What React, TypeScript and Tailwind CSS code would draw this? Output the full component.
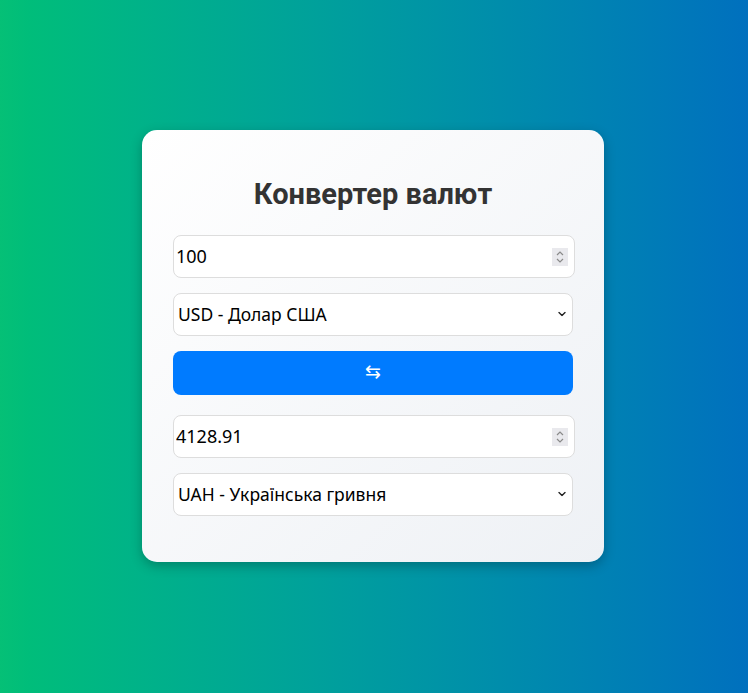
import { useState } from "react";

const RATES: Record<string, number> = { USD: 1, UAH: 41.2891, EUR: 0.92 };

// grey spin box drawn over the number field, as the browser shows it
function Spinner() {
  return (
    <span className="pointer-events-none absolute top-[13px] right-[5px] flex h-[18px] w-[16px] items-center justify-center bg-[#e9e9ed]">
      <svg width="10" height="14" viewBox="0 0 10 14" fill="none" stroke="#8a8a8a" strokeWidth="1.2">
        <path d="M2 5 L5 2 L8 5" />
        <path d="M2 9 L5 12 L8 9" />
      </svg>
    </span>
  );
}

function Chevron() {
  return (
    <svg
      className="pointer-events-none absolute top-1/2 right-[7px] -translate-y-1/2"
      width="8"
      height="5"
      viewBox="0 0 8 5"
      fill="none"
      stroke="#222"
      strokeWidth="1.4"
      strokeLinecap="round"
      strokeLinejoin="round"
    >
      <path d="M1 1 L4 4 L7 1" />
    </svg>
  );
}

function CurrencySelect({ value, onChange }: { value: string; onChange: (v: string) => void }) {
  return (
    <div className="relative mt-[15px] w-[400px]">
      <select
        value={value}
        onChange={(e) => onChange(e.target.value)}
        className="h-[43px] w-[400px] appearance-none rounded-[8px] border border-[#ddd] bg-white pl-[4px] text-[17.5px] text-black outline-none"
      >
        <option value="USD">USD - Долар США</option>
        <option value="EUR">EUR - Євро</option>
        <option value="UAH">UAH - Українська гривня</option>
      </select>
      <Chevron />
    </div>
  );
}

export default function App() {
  const [amount, setAmount] = useState("100");
  const [from, setFrom] = useState("USD");
  const [to, setTo] = useState("UAH");

  const result = ((parseFloat(amount) || 0) * RATES[to]) / RATES[from];

  const swap = () => {
    setFrom(to);
    setTo(from);
  };

  const field =
    "h-[43px] w-[402px] rounded-[8px] border border-[#ddd] bg-white pl-[2px] pr-[3px] text-[18px] text-black outline-none [appearance:textfield] [&::-webkit-inner-spin-button]:appearance-none [&::-webkit-outer-spin-button]:appearance-none";

  return (
    <div className="flex min-h-[693px] w-full items-center justify-center bg-gradient-to-r from-[#05c076] to-[#0170be]">
      <div
        className="mr-[2px] mb-[2px] w-[462px] rounded-[15px] bg-gradient-to-br from-white to-[#eef1f5] px-[31px] pt-[44px] pb-[46px] shadow-[0_4px_12px_rgba(0,0,0,0.25)]"
        style={{ fontFamily: '"Noto Sans", sans-serif' }}
      >
        <h1 className="mb-[21px] text-center font-['Roboto',sans-serif] text-[29px] font-bold leading-[40px] text-[#333]">
          Конвертер валют
        </h1>

        <div className="flex flex-col">
          <div className="relative">
            <input
              type="number"
              value={amount}
              onChange={(e) => setAmount(e.target.value)}
              className={field}
            />
            <Spinner />
          </div>
          <CurrencySelect value={from} onChange={setFrom} />
          <button
            type="button"
            onClick={swap}
            className="mt-[15px] flex h-[44px] w-[400px] items-center justify-center rounded-[8px] bg-[#007bff] pb-[3px] font-['DejaVu_Sans',sans-serif] text-[19px] leading-none text-white"
          >
            ⇆
          </button>
          <div className="relative mt-[20px]">
            <input type="number" readOnly value={result.toFixed(2)} className={field} />
            <Spinner />
          </div>
          <CurrencySelect value={to} onChange={setTo} />
        </div>
      </div>
    </div>
  );
}
